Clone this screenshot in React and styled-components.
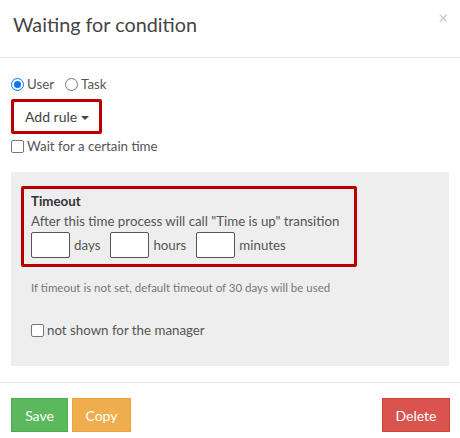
import React from 'react';
import styled, { createGlobalStyle } from 'styled-components';

const GlobalStyle = createGlobalStyle`
    html, body {
        margin: 0;
        padding: 0;
        background: #fff;
    }
    body {
        font-family: Lato, 'Open Sans', Arial, sans-serif;
        font-size: 13.3px;
        color: #555;
    }
    * {
        box-sizing: border-box;
    }
`;

const Modal = styled.div`
    width: 460px;
    height: 438px;
    background: #fff;
    display: flex;
    flex-direction: column;
`;

const Header = styled.div`
    height: 58px;
    border-bottom: 1px solid #e5e5e5;
    display: flex;
    align-items: center;
    justify-content: space-between;
    padding: 0 12px 0 13px;
`;

const Title = styled.h4`
    margin: 0 0 10px;
    font-size: 19.8px;
    font-weight: 400;
    color: #444;
`;

const Close = styled.span`
    font-size: 17px;
    color: #c8c8c8;
    align-self: flex-start;
    margin-top: 7px;
`;

const Body = styled.div`
    height: 324px;
    padding: 18px 11px 0 11px;
    display: flex;
    flex-direction: column;
`;

const RadioRow = styled.div`
    display: flex;
    align-items: center;
    gap: 11px;
    height: 16px;
    color: #555;
`;

const Choice = styled.label`
    display: flex;
    align-items: center;
    gap: 3px;
`;

const Radio = styled.span`
    width: 13px;
    height: 13px;
    border-radius: 50%;
    border: 1px solid ${(p) => (p.$checked ? '#0075ff' : '#767676')};
    display: inline-flex;
    align-items: center;
    justify-content: center;
    &::after {
        content: '';
        width: 7px;
        height: 7px;
        border-radius: 50%;
        background: ${(p) => (p.$checked ? '#0075ff' : 'transparent')};
    }
`;

const Highlight = styled.div`
    border: 3px solid #b80000;
    border-radius: 2px;
    width: ${(p) => p.$width}px;
`;

const RuleBox = styled(Highlight)`
    margin-top: 7px;
    height: 35px;
    display: flex;
    align-items: center;
    padding-left: 11px;
`;

const DropButton = styled.span`
    display: flex;
    align-items: center;
    gap: 4px;
    color: #444;
    font-size: 14px;
`;

const Caret = styled.span`
    width: 0;
    height: 0;
    border-left: 4px solid transparent;
    border-right: 4px solid transparent;
    border-top: 4px solid #444;
    margin-top: 2px;
`;

const CheckLine = styled.label`
    display: flex;
    align-items: center;
    gap: 3px;
    margin-top: ${(p) => p.$top}px;
    color: #555;
    height: 16px;
`;

const Check = styled.span`
    width: 13px;
    height: 13px;
    border: 1px solid #767676;
    border-radius: 2px;
    background: #fff;
`;

const Panel = styled.div`
    margin-top: 18px;
    background: #eee;
    height: 194px;
    padding: 14px 10px 0 10px;
`;

const TimeoutBox = styled(Highlight)`
    height: 81px;
    padding: 4px 0 0 7px;
`;

const Label = styled.div`
    font-weight: 700;
    color: #333;
    line-height: 16px;
`;

const Desc = styled.div`
    color: #555;
    line-height: 16px;
    margin-top: 4px;
    white-space: nowrap;
`;

const InputRow = styled.div`
    display: flex;
    align-items: center;
    margin-top: 3px;
`;

const NumInput = styled.input`
    width: 39px;
    height: 26px;
    border: 1px solid #555;
    border-radius: 2px;
    background: #fff;
    margin-right: 4px;
    padding: 0;
`;

const Unit = styled.span`
    margin-right: 10px;
    color: #555;
`;

const Note = styled.div`
    margin: 14px 0 0 10px;
    font-size: 11.5px;
    line-height: 14px;
    color: #777;
`;

const PanelCheck = styled(CheckLine)`
    margin-left: 10px;
`;

const Footer = styled.div`
    border-top: 1px solid #e5e5e5;
    padding: 15px 10px 6px 11px;
    display: flex;
    gap: 4px;
`;

const Button = styled.button`
    height: 34px;
    width: ${(p) => p.$width}px;
    padding: 0;
    border: 1px solid ${(p) => p.$border};
    background: ${(p) => p.$bg};
    color: #fff;
    font-family: inherit;
    font-size: 14px;
    border-radius: 0;
    margin-left: ${(p) => (p.$push ? 'auto' : '0')};
`;

export default function App() {
    return (
        <Modal>
            <GlobalStyle />
            <Header>
                <Title>Waiting for condition</Title>
                <Close>×</Close>
            </Header>
            <Body>
                <RadioRow>
                    <Choice>
                        <Radio $checked />
                        User
                    </Choice>
                    <Choice>
                        <Radio />
                        Task
                    </Choice>
                </RadioRow>
                <RuleBox $width={91}>
                    <DropButton>
                        Add rule <Caret />
                    </DropButton>
                </RuleBox>
                <CheckLine $top={4}>
                    <Check />
                    Wait for a certain time
                </CheckLine>
                <Panel>
                    <TimeoutBox $width={336}>
                        <Label>Timeout</Label>
                        <Desc>After this time process will call "Time is up" transition</Desc>
                        <InputRow>
                            <NumInput />
                            <Unit>days</Unit>
                            <NumInput />
                            <Unit>hours</Unit>
                            <NumInput />
                            <Unit>minutes</Unit>
                        </InputRow>
                    </TimeoutBox>
                    <Note>If timeout is not set, default timeout of 30 days will be used</Note>
                    <PanelCheck $top={27}>
                        <Check />
                        not shown for the manager
                    </PanelCheck>
                </Panel>
            </Body>
            <Footer>
                <Button $bg="#5cb85c" $border="#4cae4c" $width={57}>Save</Button>
                <Button $bg="#f0ad4e" $border="#eea236" $width={59}>Copy</Button>
                <Button $bg="#d9534f" $border="#d43f3a" $width={68} $push>Delete</Button>
            </Footer>
        </Modal>
    );
}
